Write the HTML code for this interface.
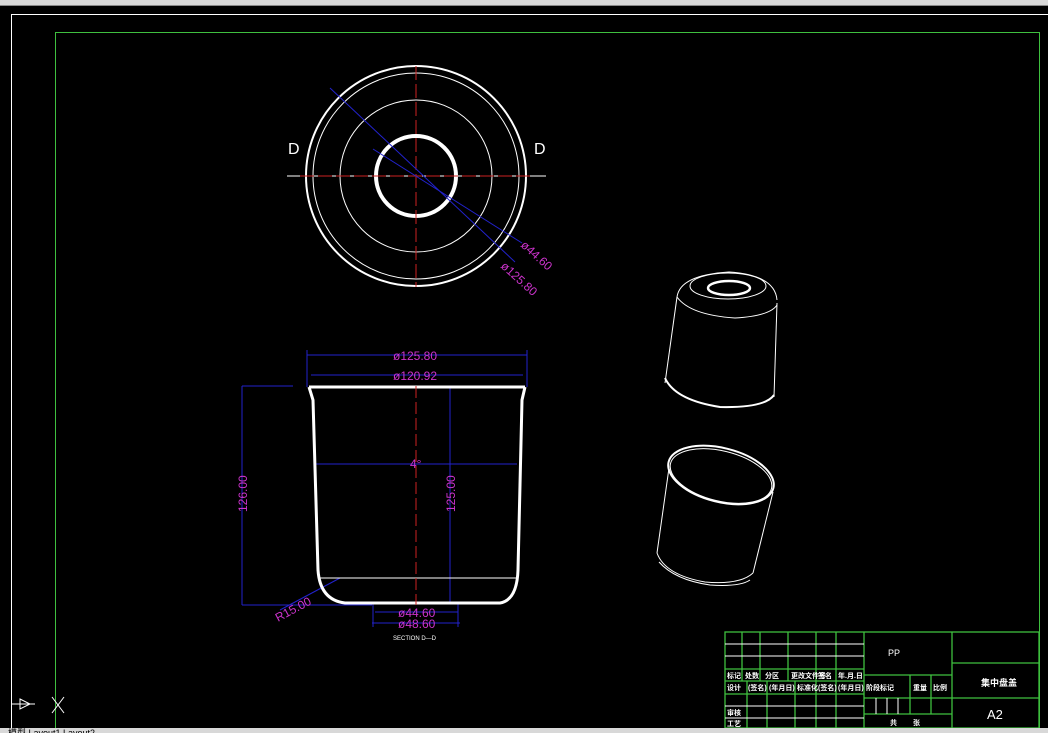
<!DOCTYPE html>
<html><head><meta charset="utf-8"><style>
html,body{margin:0;padding:0;background:#000;width:1048px;height:733px;overflow:hidden}
svg{display:block}
text{font-family:"Liberation Sans","Noto Sans CJK SC",sans-serif}
</style></head><body>
<svg width="1048" height="733" viewBox="0 0 1048 733" xmlns="http://www.w3.org/2000/svg">
<rect width="1048" height="733" fill="#000"/>
<rect x="0" y="0" width="1048" height="6" fill="#d8d8d8"/>
<line x1="0" y1="5.5" x2="1048" y2="5.5" stroke="#888"/>
<line x1="11" y1="14.5" x2="1048" y2="14.5" stroke="#fff" stroke-width="1"/>
<line x1="11.5" y1="14" x2="11.5" y2="728" stroke="#fff"/>
<rect x="55.5" y="32.5" width="984" height="700" fill="none" stroke="#3fbf3f"/>
<!-- top view -->
<g fill="none" stroke="#fff">
<circle cx="416" cy="176" r="110" stroke-width="2"/>
<circle cx="416" cy="176" r="103"/>
<circle cx="416" cy="176" r="76"/>
<circle cx="416" cy="176" r="40" stroke-width="4"/>
<line x1="287" y1="176" x2="546" y2="176"/>
</g>
<g stroke="#c22" stroke-dasharray="14,4">
<line x1="300" y1="176" x2="530" y2="176"/>
<line x1="416" y1="66" x2="416" y2="287"/>
</g>
<g stroke="#22c" stroke-width="1">
<line x1="330" y1="88" x2="515" y2="262"/>
<line x1="373" y1="149" x2="522" y2="243"/>
</g>
<text x="288" y="154" fill="#fff" font-size="16">D</text>
<text x="534" y="154" fill="#fff" font-size="16">D</text>
<text x="520" y="246" fill="#c3c" font-size="12" transform="rotate(42 520 246)">ø44.60</text>
<text x="500" y="267" fill="#c3c" font-size="12" transform="rotate(42 500 267)">ø125.80</text>
<!-- section -->
<g stroke="#22c" fill="none">
<line x1="307" y1="355" x2="527" y2="355"/>
<line x1="307" y1="350" x2="307" y2="387"/>
<line x1="527" y1="350" x2="527" y2="387"/>
<line x1="311" y1="375" x2="523" y2="375"/>
<line x1="242" y1="386" x2="293" y2="386"/>
<line x1="242" y1="386" x2="242" y2="605"/>
<line x1="242" y1="605" x2="372" y2="605"/>
<line x1="450" y1="388" x2="450" y2="602"/>
<line x1="315" y1="464" x2="517" y2="464"/>
<line x1="375" y1="612" x2="458" y2="612"/>
<line x1="372" y1="623" x2="460" y2="623"/>
<line x1="373" y1="603" x2="373" y2="627"/>
<line x1="458" y1="603" x2="458" y2="627"/>
<line x1="280" y1="610" x2="340" y2="578"/>
</g>
<path d="M309 387 L313 400 L318 570 Q320 600 345 603 L500 603 Q517 600 518 570 L522 400 L525 387" fill="none" stroke="#fff" stroke-width="3"/>
<line x1="309" y1="387" x2="525" y2="387" stroke="#fff" stroke-width="3"/>
<line x1="318" y1="578" x2="518" y2="578" stroke="#fff"/>
<line x1="416" y1="386" x2="416" y2="605" stroke="#c22" stroke-dasharray="12,4"/>
<g fill="#c3c" font-size="12">
<text x="393" y="360">ø125.80</text>
<text x="393" y="380">ø120.92</text>
<text x="410" y="468">4°</text>
<text x="398" y="617">ø44.60</text>
<text x="398" y="628">ø48.60</text>
<text x="247" y="512" transform="rotate(-90 247 512)">126.00</text>
<text x="455" y="512" transform="rotate(-90 455 512)">125.00</text>
<text x="278" y="622" transform="rotate(-28 278 622)">R15.00</text>
</g>
<text x="393" y="640" fill="#fff" font-size="6">SECTION D—D</text>
<!-- 3D parts -->
<g fill="none" stroke="#fff">
<path d="M677 297 Q680 275 729 272 Q775 275 777 300"/>
<path d="M677 297 Q690 315 735 318 Q770 316 777 305"/>
<ellipse cx="728" cy="286" rx="38" ry="13"/>
<ellipse cx="729" cy="288" rx="21" ry="7" stroke-width="2.5"/>
<path d="M677 297 L665 383"/>
<path d="M777 303 L774 397"/>
<path d="M665 378 Q675 400 720 407 Q765 408 774 395" stroke-width="2"/>
<ellipse cx="721" cy="475" rx="54" ry="27" transform="rotate(14 721 475)" stroke-width="2"/>
<ellipse cx="721" cy="476" rx="52" ry="25" transform="rotate(14 721 476)"/>
<path d="M669 468 L657 553"/>
<path d="M773 492 L753 573"/>
<path d="M657 553 Q665 575 705 582 Q740 585 753 573"/>
<path d="M659 562 Q675 580 710 585 Q740 587 750 580"/>
</g>
<!-- title block -->
<g stroke="#3fbf3f" fill="none" stroke-width="1.3">
<rect x="725" y="632" width="314" height="96"/>
<line x1="864" y1="632" x2="864" y2="728"/>
<line x1="952" y1="632" x2="952" y2="728"/>
<line x1="952" y1="663" x2="1039" y2="663"/>
<line x1="952" y1="698" x2="1039" y2="698"/>
<line x1="864" y1="675" x2="952" y2="675"/>
<line x1="864" y1="698" x2="952" y2="698"/>
<line x1="864" y1="714" x2="952" y2="714"/>
<line x1="910" y1="675" x2="910" y2="714"/>
<line x1="931" y1="675" x2="931" y2="714"/>
<line x1="725" y1="669" x2="864" y2="669"/>
<line x1="725" y1="681" x2="864" y2="681"/>
<line x1="725" y1="694" x2="864" y2="694"/>
<line x1="742" y1="632" x2="742" y2="681"/>
<line x1="760" y1="632" x2="760" y2="681"/>
<line x1="788" y1="632" x2="788" y2="681"/>
<line x1="816" y1="632" x2="816" y2="681"/>
<line x1="836" y1="632" x2="836" y2="681"/>
<line x1="747" y1="681" x2="747" y2="728"/>
<line x1="767" y1="681" x2="767" y2="728"/>
<line x1="795" y1="681" x2="795" y2="728"/>
<line x1="816" y1="681" x2="816" y2="728"/>
<line x1="836" y1="681" x2="836" y2="728"/>
</g>
<g stroke="#fff">
<line x1="725" y1="644" x2="864" y2="644"/>
<line x1="725" y1="656" x2="864" y2="656"/>
<line x1="725" y1="706" x2="864" y2="706"/>
<line x1="725" y1="718" x2="864" y2="718"/>
<line x1="876" y1="698" x2="876" y2="714"/>
<line x1="887" y1="698" x2="887" y2="714"/>
<line x1="898" y1="698" x2="898" y2="714"/>
</g>
<g fill="#fff" font-size="7" font-weight="bold">
<text x="727" y="678">标记</text><text x="745" y="678">处数</text><text x="765" y="678">分区</text><text x="791" y="678">更改文件号</text><text x="818" y="678">签名</text><text x="838" y="678">年.月.日</text>
<text x="727" y="690">设计</text><text x="748" y="690">(签名)</text><text x="769" y="690">(年月日)</text><text x="797" y="690">标准化</text><text x="818" y="690">(签名)</text><text x="838" y="690">(年月日)</text>
<text x="866" y="690">阶段标记</text><text x="913" y="690">重量</text><text x="933" y="690">比例</text>
<text x="727" y="715">审核</text><text x="727" y="726">工艺</text>
<text x="890" y="725">共</text><text x="913" y="725">张</text>
<text x="981" y="686" font-size="9">集中盘盖</text>
</g>
<text x="888" y="656" fill="#fff" font-size="9">PP</text>
<text x="987" y="719" fill="#fff" font-size="13">A2</text>
<!-- UCS icon -->
<g stroke="#fff" fill="none">
<line x1="11" y1="704" x2="35" y2="704"/>
<path d="M20 699 L30 704 L20 709 Z"/>
<line x1="52" y1="697" x2="64" y2="713"/>
<line x1="64" y1="697" x2="52" y2="713"/>
</g>
<rect x="0" y="728" width="1048" height="5" fill="#d8d8d8"/>
<text x="8" y="736" font-size="9" fill="#000">模型 Layout1 Layout2</text>
</svg>
</body></html>
